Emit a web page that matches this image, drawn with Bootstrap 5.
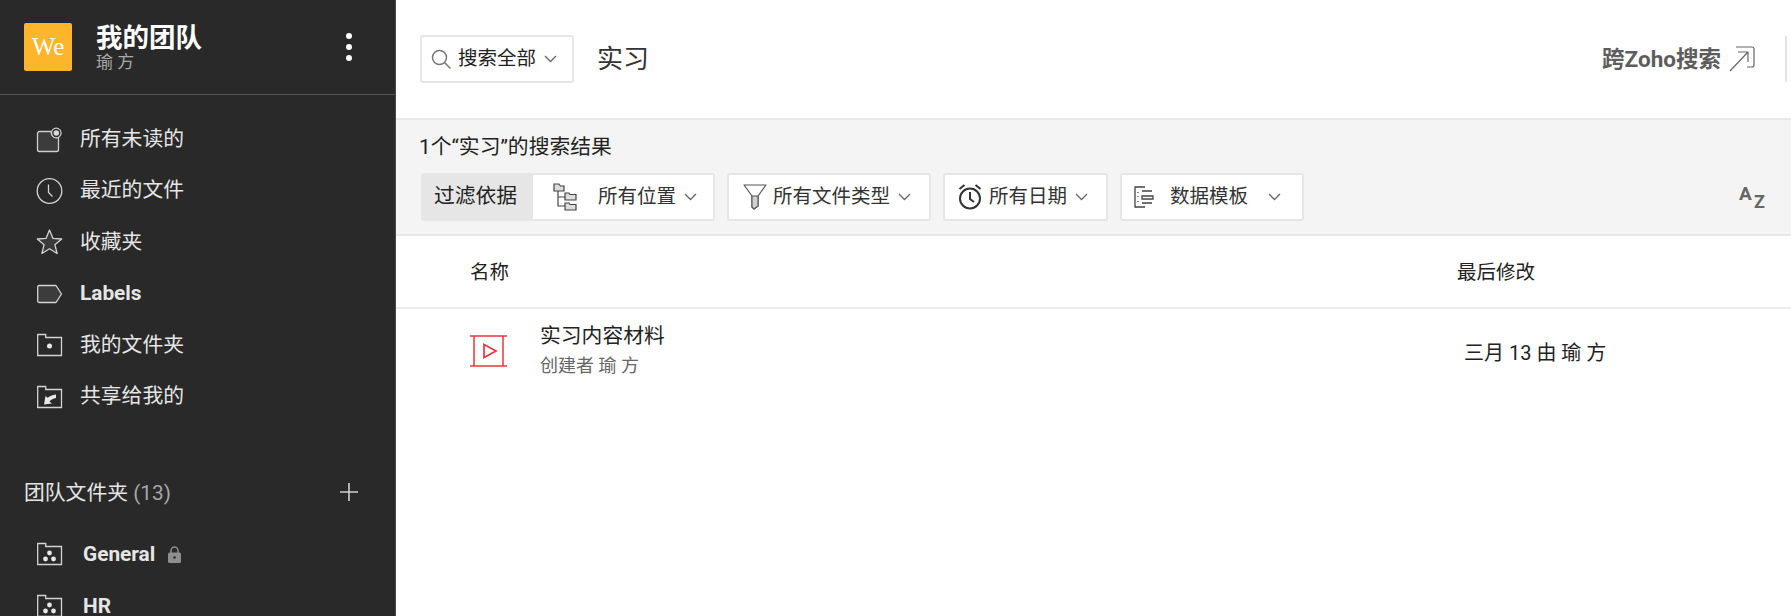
<!DOCTYPE html>
<html lang="zh-CN">
<head>
<meta charset="UTF-8" />
<title>搜索</title>
<link href="https://cdn.jsdelivr.net/npm/bootstrap@5.3.2/dist/css/bootstrap.min.css" rel="stylesheet" />
<style>
  html, body { height: 100%; overflow: hidden; }
  body { font-family: Roboto, "Noto Sans CJK SC", sans-serif; color: #222; background: #fff; }
  svg { display: block; flex: none; }
  .side { width: 396px; height: 616px; background: #292929; border-right: 1px solid #4a4a4a; color: #e6e6e6; overflow: hidden; flex: none; }
  .side-head { height: 95px; border-bottom: 1px solid #555; padding: 0 43px 0 24px; }
  .logo-box { width: 48px; height: 48px; background: #fdb62c; border-radius: 2px; color: #fff; font: 25px/48px "Liberation Serif", serif; text-align: center; }
  .team-name { font-size: 26.5px; font-weight: 700; line-height: 30px; color: #fff; }
  .team-user { font-size: 17px; line-height: 20px; color: #a8a8a8; margin-top: -1px; }
  .kebab { width: 6px; }
  .kebab i { display: block; width: 6px; height: 6px; border-radius: 50%; background: #fff; margin: 5px 0; }
  .side-list { padding-top: 19px; }
  .side-row { height: 51.4px; padding-left: 36px; font-size: 20.8px; }
  .side-row .ico { width: 28px; margin-right: 16px; }
  .side-row b { font-weight: 700; font-size: 20.8px; }
  .team-row { height: 52px; }
  .team-row .ico { margin-right: 19px; }
  .lock-ico { margin-left: 13px; }
  .team-head { height: 40px; margin-top: 51px; margin-bottom: 15px; padding: 0 36px 0 24px; font-size: 20.8px; }
  .team-head span { color: #a6a6a6; }
  .team-head svg { margin-top: -3px; }
  .main-top { height: 120px; border-bottom: 2px solid #e8e8e8; padding: 0 4px 0 24px; }
  .scope-btn { width: 154px; height: 48px; border: 2px solid #e6e6e6; border-radius: 3px; padding-left: 9px; font-size: 19.5px; gap: 8px; }
  .scope-text { margin-left: -1px; }
  .query { font-size: 26px; line-height: 1; margin-left: 23px; color: #333; }
  .cross { font-size: 22.5px; font-weight: 700; color: #5d5d5d; margin-top: 2px; }
  .cross-sep { width: 2px; height: 46px; background: #e4e4e4; margin-left: 30px; }
  .band { height: 116px; background: #f4f4f4; border-bottom: 2px solid #e8e8e8; padding: 12px 26px 0 23px; }
  .band-title { font-size: 20.8px; line-height: 30px; margin-bottom: 11px; }
  .flt-row { height: 48px; }
  .flt { height: 48px; background: #fff; border: 2px solid #e6e6e6; border-radius: 3px; font-size: 19.5px; color: #333; }
  .flt-label { width: 112px; height: 48px; margin-left: 2px; padding-right: 3px; background: #e6e6e6; border-radius: 3px 0 0 3px; font-size: 20.8px; text-align: center; line-height: 46px; }
  .flt-loc { width: 182px; margin-right: 12px; border-left: 0; border-radius: 0 3px 3px 0; padding-left: 20px; }
  .flt-loc span { margin-left: 21px; }
  .flt-type { width: 204px; margin-right: 12px; padding-left: 14px; }
  .flt-type span { margin-left: 6px; }
  .flt-date { width: 165px; margin-right: 12px; padding-left: 13px; }
  .flt-date span { margin-left: 7px; }
  .flt-tpl { width: 184px; padding-left: 12px; }
  .flt-tpl span { margin-left: 16px; }
  .flt-tpl .chev { margin-left: 20px; }
  .az { margin-left: auto; font-weight: 700; color: #666; line-height: 1; width: 26px; height: 26px; position: relative; }
  .az em { font-style: normal; position: absolute; }
  .az .a { left: 0; top: 0; font-size: 19px; }
  .az .z { right: 0; bottom: -1px; font-size: 18px; }
  .col-name { width: 1061px; padding-left: 74px; }
  .list-head { height: 73px; border-bottom: 2px solid #ececec; font-size: 19.5px; padding-top: 2px; }
  .file-row { height: 84px; }
  .file-title { font-size: 20.8px; line-height: 29px; }
  .file-sub { font-size: 18px; line-height: 29px; color: #666; }
  .file-date { font-size: 20px; margin-left: 7px; margin-top: 3px; }
</style>
</head>
<body>
<div class="d-flex">
  <aside class="side">
    <div class="side-head d-flex align-items-center">
      <div class="logo-box flex-shrink-0">We</div>
      <div class="ms-4 flex-grow-1">
        <div class="team-name">我的团队</div>
        <div class="team-user">瑜 方</div>
      </div>
      <div class="kebab"><i></i><i></i><i></i></div>
    </div>
    <div class="side-list">
      <div class="side-row d-flex align-items-center">
        <span class="ico"><svg width="28" height="28" viewBox="0 0 28 28"><path d="M15 5.500H3.500a2 2 0 0 0-2 2v16a2 2 0 0 0 2 2h17a2 2 0 0 0 2-2V11.500a6 6 0 0 1-7.500-6z" fill="#3c3c3c" stroke="#cfcfcf" stroke-width="1.300"/><circle cx="20.300" cy="7" r="4.800" fill="#292929" stroke="#cfcfcf" stroke-width="1.200"/><circle cx="20.300" cy="7" r="2.800" fill="#d8d8d8"/></svg></span>
        <span>所有未读的</span>
      </div>
      <div class="side-row d-flex align-items-center">
        <span class="ico"><svg width="28" height="28" viewBox="0 0 28 28" fill="none" stroke="#d4d4d4" stroke-width="1.300"><circle cx="13.500" cy="14" r="12.300"/><path d="M12.500 7.500v8l4 4"/></svg></span>
        <span>最近的文件</span>
      </div>
      <div class="side-row d-flex align-items-center">
        <span class="ico"><svg width="28" height="28" viewBox="0 0 28 28"><path d="M13.500 2l3.400 8.300 8.800.7-6.800 5.700 2.200 8.800-7.600-4.700-7.600 4.700 2.200-8.800L1.300 11l8.800-.7z" fill="#3a3a3a" stroke="#d4d4d4" stroke-width="1.300" stroke-linejoin="round"/></svg></span>
        <span>收藏夹</span>
      </div>
      <div class="side-row d-flex align-items-center">
        <span class="ico"><svg width="28" height="28" viewBox="0 0 28 28"><path d="M3.200 5.500h16.800l5.500 8.500-5.500 8.500H3.200a1.500 1.500 0 0 1-1.500-1.500V7a1.500 1.500 0 0 1 1.500-1.500z" fill="#3c3c3c" stroke="#d4d4d4" stroke-width="1.300" stroke-linejoin="round"/></svg></span>
        <b>Labels</b>
      </div>
      <div class="side-row d-flex align-items-center">
        <span class="ico"><svg width="28" height="24" viewBox="0 0 28 24" fill="none" stroke="#d4d4d4" stroke-width="1.300"><path d="M1.700 1.500h8v3h15.800v18H1.700z"/><circle cx="13.500" cy="13" r="2.500" fill="#e8e8e8" stroke="none"/></svg></span>
        <span>我的文件夹</span>
      </div>
      <div class="side-row d-flex align-items-center">
        <span class="ico"><svg width="28" height="24" viewBox="0 0 28 24" fill="none" stroke="#d4d4d4" stroke-width="1.300"><path d="M1.700 1.500h8v3h15.800v18H1.700z"/><path d="M20 9.500c-4 .5-6.500 1.700-8.300 3.300L9.500 11 8 19.500l8-.9-2.500-2.200c1.500-1.700 3.700-3 6.500-3.500z" fill="#e8e8e8" stroke="none"/></svg></span>
        <span>共享给我的</span>
      </div>
    </div>
    <div class="team-head d-flex align-items-center justify-content-between">
      <div>团队文件夹 <span>(13)</span></div>
      <svg width="20" height="20" viewBox="0 0 20 20" stroke="#cfcfcf" stroke-width="1.600"><path d="M10 1v18M1 10h18"/></svg>
    </div>
    <div class="side-row team-row d-flex align-items-center">
      <span class="ico"><svg width="28" height="24" viewBox="0 0 28 24" fill="none" stroke="#d4d4d4" stroke-width="1.300"><path d="M1.700 1.500h8v3h15.800v18H1.700z"/><g fill="#e8e8e8" stroke="none"><circle cx="13.500" cy="11" r="2.400"/><circle cx="9.500" cy="17" r="2.400"/><circle cx="17.500" cy="17" r="2.400"/></g></svg></span>
      <b>General</b>
      <svg class="lock-ico" width="13" height="17" viewBox="0 0 13 17"><path d="M3 7V4.500a3.500 3.500 0 0 1 7 0V7" fill="none" stroke="#8e8e8e" stroke-width="1.500"/><rect y="6.500" width="13" height="10.500" rx="1.500" fill="#8e8e8e"/><circle cx="6.500" cy="11.500" r="1.300" fill="#292929"/></svg>
    </div>
    <div class="side-row team-row d-flex align-items-center">
      <span class="ico"><svg width="28" height="24" viewBox="0 0 28 24" fill="none" stroke="#d4d4d4" stroke-width="1.300"><path d="M1.700 1.500h8v3h15.800v18H1.700z"/><g fill="#e8e8e8" stroke="none"><circle cx="13.500" cy="11" r="2.400"/><circle cx="9.500" cy="17" r="2.400"/><circle cx="17.500" cy="17" r="2.400"/></g></svg></span>
      <b>HR</b>
    </div>
  </aside>

  <main class="flex-grow-1">
    <div class="main-top d-flex align-items-center">
      <div class="scope-btn d-flex align-items-center">
        <svg width="20" height="20" viewBox="0 0 20 20" fill="none" stroke="#777" stroke-width="1.500"><circle cx="8.500" cy="8.500" r="7"/><path d="M13.500 13.500l6 6"/></svg>
        <span class="scope-text text-nowrap">搜索全部</span>
        <svg class="chev" width="13" height="8" viewBox="0 0 13 8" fill="none" stroke="#666" stroke-width="1.300"><path d="M1 1l5.500 5.500L12 1"/></svg>
      </div>
      <div class="query">实习</div>
      <div class="cross ms-auto">跨Zoho搜索</div>
      <svg class="ms-2" width="26" height="26" viewBox="0 0 26 26" fill="none" stroke="#666" stroke-width="1.200"><path d="M7 1h16a2 2 0 0 1 2 2v16a2 2 0 0 1-2 2h-5"/><path d="M1 25L19 6M9 6h10v10"/></svg>
      <div class="cross-sep"></div>
    </div>

    <div class="band">
      <div class="band-title">1个“实习”的搜索结果</div>
      <div class="flt-row d-flex align-items-center">
        <div class="flt-label">过滤依据</div>
        <div class="flt flt-loc d-flex align-items-center">
          <svg width="24" height="28" viewBox="0 0 24 28" stroke="#444" stroke-width="1.200"><path d="M5 8v15h7M5 14h7" fill="none"/><path d="M1 1h5l1.500 2H11v5H1zM12 10h4l1 1.500h6V17H12zM12 20h4l1 1.500h6V27H12z" fill="#dcdcdc"/></svg>
          <span class="text-nowrap">所有位置</span>
          <svg class="chev ms-2" width="13" height="8" viewBox="0 0 13 8" fill="none" stroke="#666" stroke-width="1.300"><path d="M1 1l5.500 5.500L12 1"/></svg>
        </div>
        <div class="flt flt-type d-flex align-items-center">
          <svg width="24" height="26" viewBox="0 0 24 26"><path d="M1 1h22l-8 11v10l-4 3-2-2V12z" fill="#fff" stroke="#555" stroke-width="1.200" stroke-linejoin="round"/><path d="M9 12h6v10l-4 3-2-2z" fill="#d0d0d0" stroke="#555" stroke-width="1.100"/></svg>
          <span class="text-nowrap">所有文件类型</span>
          <svg class="chev ms-2" width="13" height="8" viewBox="0 0 13 8" fill="none" stroke="#666" stroke-width="1.300"><path d="M1 1l5.500 5.500L12 1"/></svg>
        </div>
        <div class="flt flt-date d-flex align-items-center">
          <svg width="24" height="28" viewBox="0 0 24 28" fill="none" stroke="#333" stroke-width="2"><circle cx="12" cy="15.500" r="10"/><path d="M12 9v7l4 3"/><path d="M1.500 6l5-4M22.500 6l-5-4"/></svg>
          <span class="text-nowrap">所有日期</span>
          <svg class="chev ms-2" width="13" height="8" viewBox="0 0 13 8" fill="none" stroke="#666" stroke-width="1.300"><path d="M1 1l5.500 5.500L12 1"/></svg>
        </div>
        <div class="flt flt-tpl d-flex align-items-center">
          <svg width="20" height="22" viewBox="0 0 20 22" fill="none" stroke="#444" stroke-width="1.300"><path d="M11 1H1v20h10"/><path d="M8 5h10M8 10h11v3H8zM8 17h10M4 6v1M4 10v1M4 15v1"/></svg>
          <span class="text-nowrap">数据模板</span>
          <svg class="chev" width="13" height="8" viewBox="0 0 13 8" fill="none" stroke="#666" stroke-width="1.300"><path d="M1 1l5.500 5.500L12 1"/></svg>
        </div>
        <div class="az"><em class="a">A</em><em class="z">Z</em></div>
      </div>
    </div>

    <div class="list-head d-flex align-items-center">
      <div class="col-name">名称</div>
      <div>最后修改</div>
    </div>
    <div class="file-row d-flex align-items-center">
      <div class="col-name d-flex align-items-center">
        <svg width="38" height="32" viewBox="0 0 38 32" fill="none" stroke="#e5383e" stroke-width="1.500"><path d="M0 1h37M0 31h37M4 1v30M33 1v30" /><path d="M14 9.500v13L26 16z" stroke-width="1.700"/></svg>
        <div class="ms-4 ps-2">
          <div class="file-title">实习内容材料</div>
          <div class="file-sub">创建者 瑜 方</div>
        </div>
      </div>
      <div class="file-date">三月 13 由 瑜 方</div>
    </div>
  </main>
</div>
<script src="https://cdn.jsdelivr.net/npm/bootstrap@5.3.2/dist/js/bootstrap.bundle.min.js"></script>
</body>
</html>
